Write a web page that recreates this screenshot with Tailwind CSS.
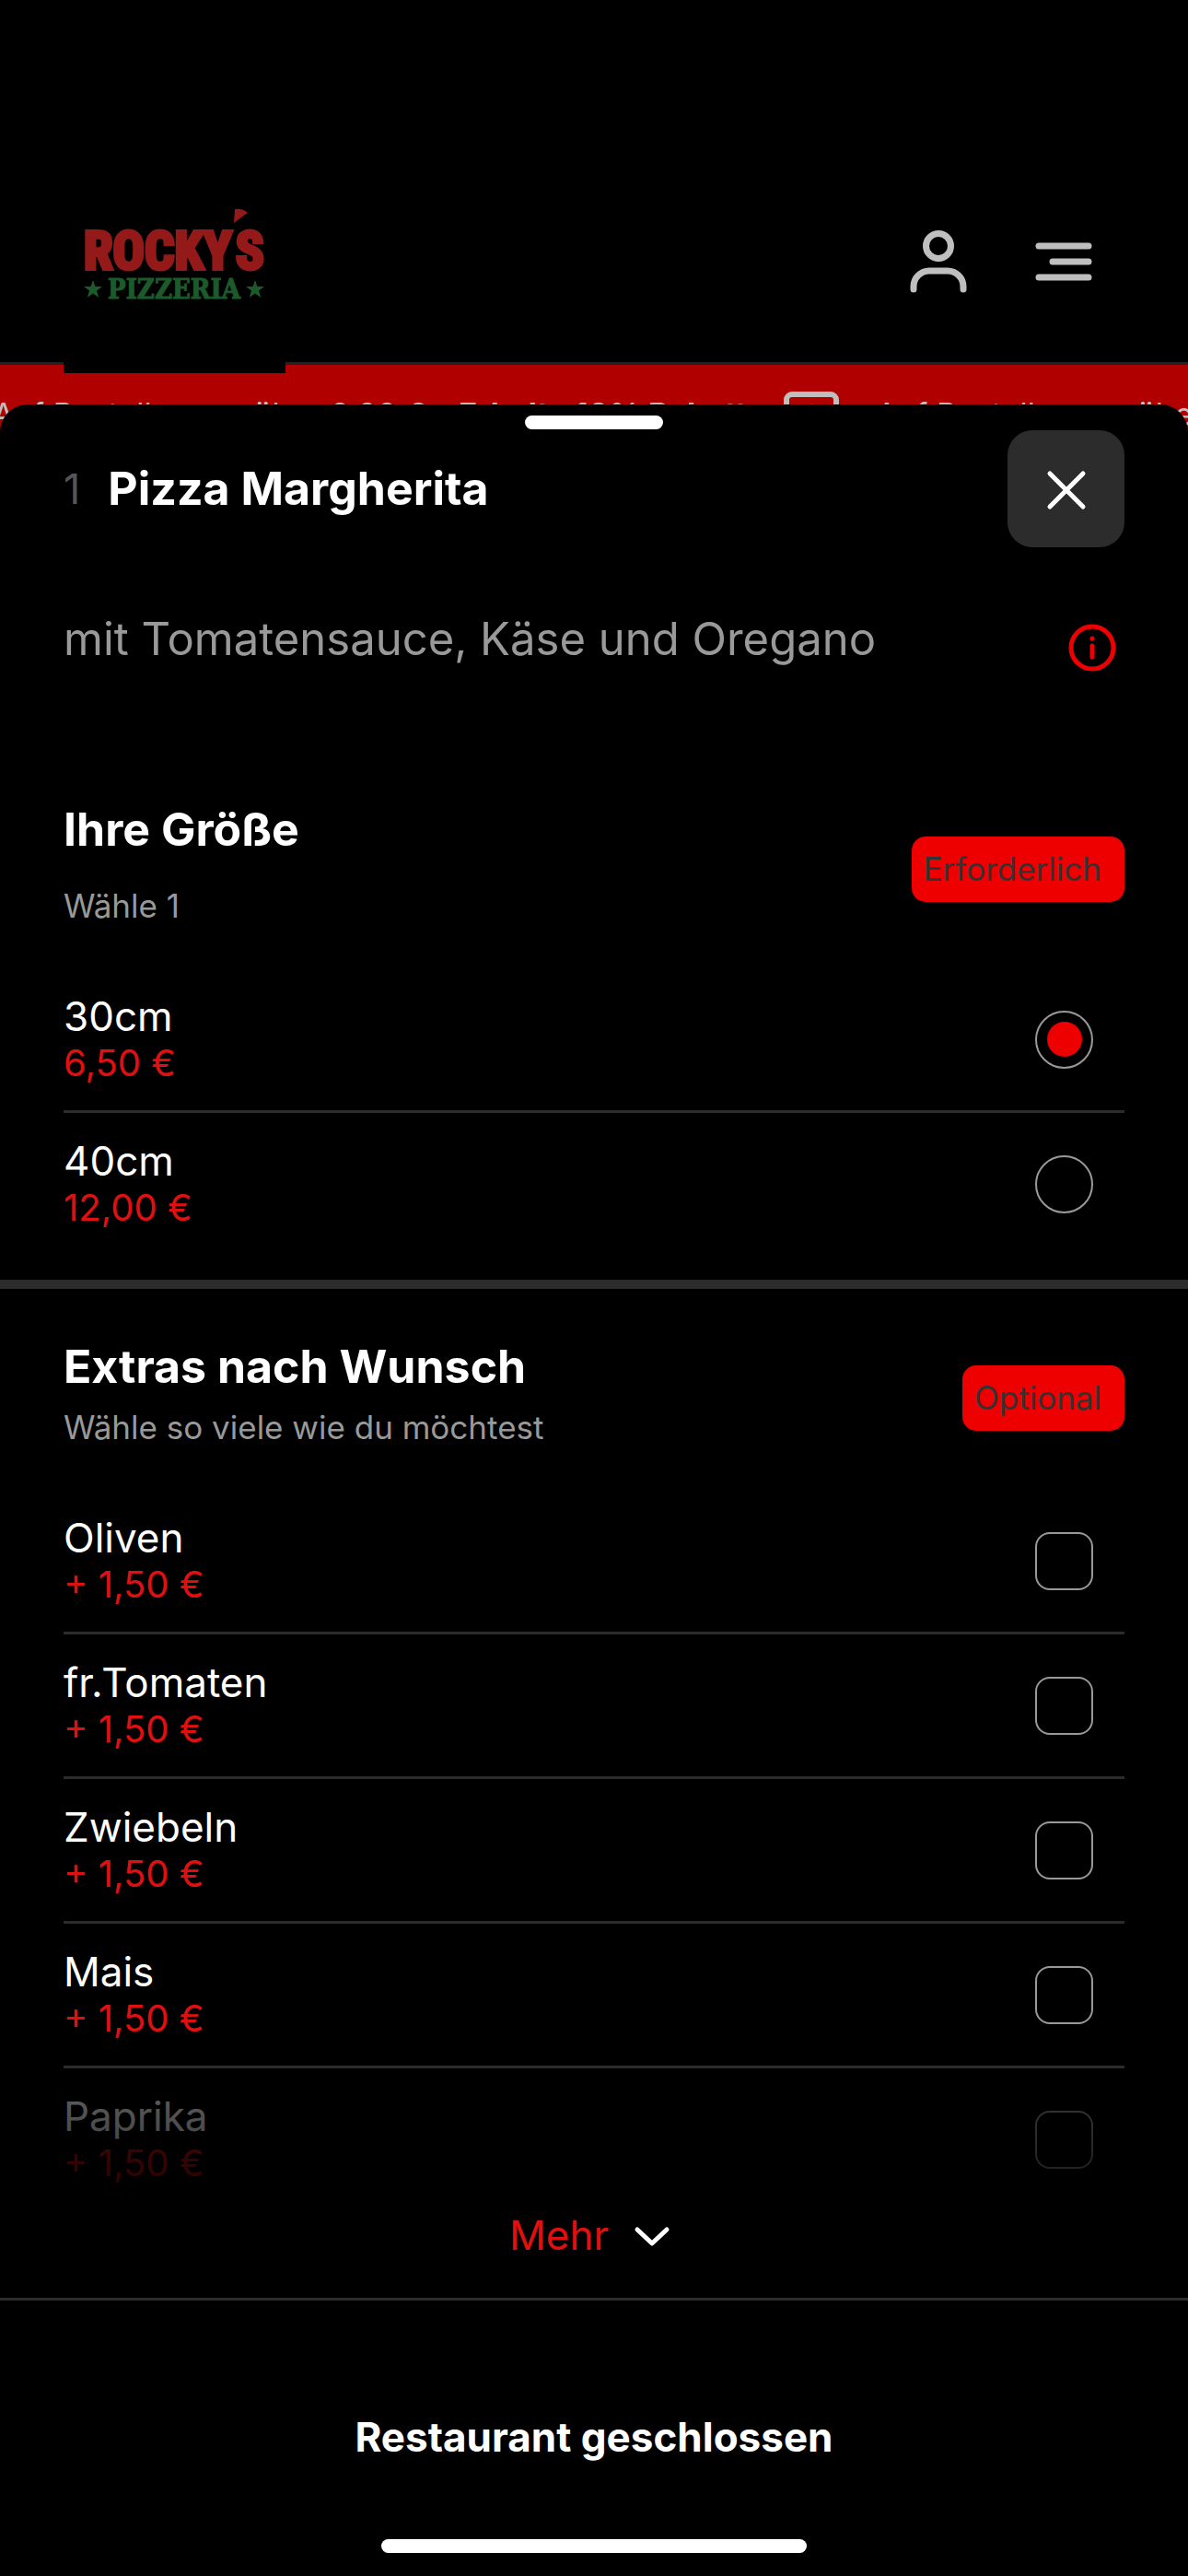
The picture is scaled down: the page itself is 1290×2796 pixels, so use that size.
<!DOCTYPE html>
<html lang="de">
<head>
  <meta charset="UTF-8" />
  <meta name="viewport" content="width=device-width, initial-scale=1.0"/>
  <title>Rocky's Pizzeria</title>
  <script src="https://cdn.jsdelivr.net/npm/@tailwindcss/browser@4"></script>
</head>
<body class="bg-black text-white font-['Inter','Liberation_Sans',sans-serif] overflow-x-hidden">

  <!-- Header -->
  <header class="flex items-start justify-between px-[69px] pt-[218px] border-b-3 border-[#222]">
    <a href="#" aria-label="Rocky's Pizzeria" class="relative z-10 block w-[241px] h-[187px] -mb-3 bg-black">
      <svg class="w-full h-full" viewBox="0 0 241 187">
        <g fill="#941a1a" stroke="#941a1a" stroke-width="4" font-family="'Liberation Sans Narrow','Roboto Condensed','DejaVu Sans Condensed',sans-serif" font-weight="700" font-size="57">
          <text x="22" y="74">ROCKY</text>
          <text x="187" y="74">S</text>
        </g>
        <!-- Pizzastück als Apostroph -->
        <path d="M186 9q8-1 14 4-6 4-15 11z" fill="#941a1a"/>
        <text x="120" y="106" text-anchor="middle" fill="#1c5a2c" stroke="#1c5a2c" font-family="'DejaVu Serif Condensed','DejaVu Serif',serif" font-weight="700" font-size="29">PIZZERIA</text>
        <g fill="#1c5a2c">
          <path id="star" d="M32 86l2.400 7h7.600l-6 4.600 2.200 7.400-6.200-4.400-6.200 4.400 2.200-7.400-6-4.600h7.600z"/>
          <use href="#star" x="176"/>
        </g>
      </svg>
    </a>
    <nav class="flex gap-1">
      <button aria-label="Konto" class="flex items-center justify-center size-[132px]">
        <svg class="size-[72px]" viewBox="0 0 72 72" fill="none" stroke="#bfbfbf" stroke-width="7" stroke-linecap="round">
          <circle cx="36" cy="19" r="13.500"/>
          <path d="M9 66v-3a17 17 0 0 1 17-17h20a17 17 0 0 1 17 17v3"/>
        </svg>
      </button>
      <button aria-label="Menü" class="flex items-center justify-center size-[132px]">
        <svg class="size-[72px]" viewBox="0 0 72 72" stroke="#bfbfbf" stroke-width="7" stroke-linecap="round">
          <path d="M9 19h54M24 36h39M9 53h54"/>
        </svg>
      </button>
    </nav>
  </header>

  <!-- Laufband -->
  <div class="flex items-center h-[106px] bg-[#b00000] text-[#bfbfbf] text-[34px] whitespace-nowrap overflow-hidden">
    <p class="-ml-2 shrink-0">Auf Bestellungen über 0,00 € - <b>Erhalte 10% Rabatt</b></p>
    <svg class="mx-10 w-[60px] h-[48px] shrink-0" viewBox="0 0 60 48" fill="none" stroke="#bfbfbf" stroke-width="6" stroke-linecap="round">
      <rect x="3" y="3" width="54" height="42" rx="6"/>
      <path d="M22 27l8-9 8 9M30 19v16"/>
    </svg>
    <p class="shrink-0">Auf Bestellungen über 0,00 € - <b>Erhalte 10% Rabatt</b></p>
  </div>

  <!-- Produkt -->
  <main class="relative -mt-[63px] pt-3 bg-black rounded-t-[30px]">
    <div class="mx-auto w-[150px] h-[15px] rounded-full bg-white"></div>

    <div class="flex items-center px-[69px] pt-px">
      <span class="text-[45px] text-[#555]">1</span>
      <h1 class="ml-[30px] text-[50px] font-bold">Pizza Margherita</h1>
      <button aria-label="Schließen" class="ml-auto flex items-center justify-center size-[127px] rounded-[27px] bg-[#2c2c2c]">
        <svg class="size-[54px]" viewBox="0 0 54 54" stroke="#fff" stroke-width="5" stroke-linecap="round">
          <path d="M9 10l36 36M45 10L9 46"/>
        </svg>
      </button>
    </div>

    <div class="flex items-end justify-between mt-16 px-[69px]">
      <p class="text-[49px] leading-[72px] text-[#999]">mit Tomatensauce, Käse und Oregano</p>
      <button aria-label="Allergene" class="mr-2">
        <svg class="size-[54px]" viewBox="0 0 54 54" fill="none" stroke="#e00" stroke-width="5" stroke-linecap="round">
          <circle cx="27" cy="27" r="23"/>
          <path d="M27 25v12"/>
          <circle cx="27" cy="17" r="2.500" fill="#e00" stroke="none"/>
        </svg>
      </button>
    </div>

    <section class="mt-[134px] px-[69px] pb-[27px]">
      <div class="flex items-center justify-between">
        <div>
          <h2 class="text-[50px] leading-[72px] font-bold">Ihre Größe</h2>
          <p class="mt-5 text-[35px] leading-[54px] text-[#999]">Wähle 1</p>
        </div>
        <span class="mt-3 pl-[13px] pr-[25px] rounded-[15px] bg-[#e00] text-[35px] leading-[71px] text-[#333]">Erforderlich</span>
      </div>
      <ul id="sizeList" class="mt-[41px]"></ul>
    </section>

    <section class="border-t-10 border-[#2c2c2c] px-[69px] pt-12">
      <div class="flex items-center justify-between">
        <div>
          <h2 class="text-[50px] leading-[72px] font-bold">Extras nach Wunsch</h2>
          <p class="mt-[3px] text-[35px] leading-[54px] text-[#999]">Wähle so viele wie du möchtest</p>
        </div>
        <span class="mt-3 pl-[13px] pr-[25px] rounded-[15px] bg-[#e00] text-[35px] leading-[71px] text-[#333]">Optional</span>
      </div>
      <div class="relative mt-[41px]">
        <ul id="extraList"></ul>
        <div class="absolute inset-x-0 bottom-0 h-[154px] bg-linear-to-b from-black/60 to-black/85 pointer-events-none"></div>
      </div>
      <button class="flex items-center mx-auto pr-1 pb-[41px] text-[44px] leading-[54px] text-[#e01010]">
        Mehr
        <svg class="ml-6 size-[48px]" viewBox="0 0 48 48" fill="none" stroke="#fff" stroke-width="5" stroke-linecap="round" stroke-linejoin="round">
          <path d="M7 18l16 15 16-15"/>
        </svg>
      </button>
    </section>
  </main>

  <!-- Fußleiste -->
  <footer class="border-t-3 border-[#2c2c2c] pt-[121px] pb-6">
    <button class="block mx-auto text-[44px] leading-[54px] font-bold">Restaurant geschlossen</button>
    <div class="mx-auto mt-[84px] w-[462px] h-[15px] rounded-full bg-white"></div>
  </footer>

  <script>
    const sizes = [
      { name: "30cm", price: "6,50 €" },
      { name: "40cm", price: "12,00 €" }
    ];

    const extras = [
      { name: "Oliven", price: "+ 1,50 €" },
      { name: "fr.Tomaten", price: "+ 1,50 €" },
      { name: "Zwiebeln", price: "+ 1,50 €" },
      { name: "Mais", price: "+ 1,50 €" },
      { name: "Paprika", price: "+ 1,50 €" }
    ];

    function renderOptions(listId, items, input) {
      document.getElementById(listId).innerHTML = items.map((item, i) => `
        <li class="border-b-3 border-[#2c2c2c] last:border-b-0">
          <label for="${listId}-${i}" class="flex items-center justify-between">
            <span class="pt-[25px] pb-[27px]">
              <span class="block text-[44px] leading-[54px]">${item.name}</span>
              <span class="block text-[40px] leading-[48px] text-[#e01010]">${item.price}</span>
            </span>
            ${input(listId + '-' + i, i)}
          </label>
        </li>
      `).join('');
    }

    renderOptions('sizeList', sizes, (id, i) => `
      <input type="radio" name="size" id="${id}" ${i === 0 ? 'checked' : ''}
        class="appearance-none grid place-content-center mr-[34px] size-[63px] rounded-full border-2 border-[#999] before:size-[38px] before:rounded-full checked:before:bg-[#e00]">
    `);

    renderOptions('extraList', extras, id => `
      <input type="checkbox" id="${id}"
        class="appearance-none mr-[34px] size-[63px] rounded-[16px] border-2 border-[#999] checked:bg-[#e00]">
    `);
  </script>

</body>
</html>
